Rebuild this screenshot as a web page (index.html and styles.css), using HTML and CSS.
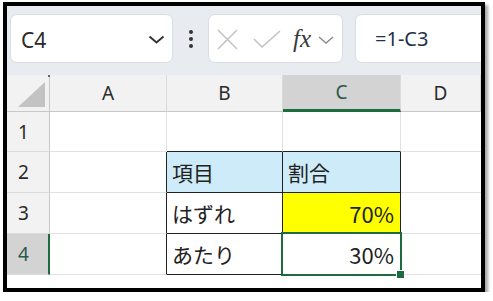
FILE: index.html
```html
<!DOCTYPE html>
<html lang="ja">
<head>
<meta charset="utf-8">
<link rel="stylesheet" href="styles.css">
</head>
<body>
<div class="frame">
  <div class="toolbar">
    <div class="namebox">
      <span class="name">C4</span>
      <svg class="chev" width="17" height="9" viewBox="0 0 17 9"><path d="M1.5 1.5 L8.5 7.5 L15.5 1.5" fill="none" stroke="#333" stroke-width="2"/></svg>
    </div>
    <div class="dots"><i></i><i></i><i></i></div>
    <div class="fxbox">
      <svg class="xicon" width="21" height="21" viewBox="0 0 21 21"><path d="M1 1 L20 20 M20 1 L1 20" stroke="#c4c4c4" stroke-width="1.6" fill="none"/></svg>
      <svg class="check" width="28" height="18" viewBox="0 0 28 18"><path d="M1 9 L9 17 L27 1" stroke="#c4c4c4" stroke-width="1.6" fill="none"/></svg>
      <span class="fx">fx</span>
      <svg class="chev2" width="16" height="8" viewBox="0 0 16 8"><path d="M1 1 L8 7 L15 1" fill="none" stroke="#8a8a8a" stroke-width="1.4"/></svg>
    </div>
    <div class="formula">=1-C3</div>
  </div>
  <div class="grid">
    <div class="corner"><svg width="27" height="25" viewBox="0 0 27 25"><path d="M27 0 L27 25 L0 25 Z" fill="#c3c3c3"/></svg><span class="cdot"></span></div>
    <div class="ch">A</div>
    <div class="ch">B</div>
    <div class="ch sel-col">C</div>
    <div class="ch last">D</div>

    <div class="rh">1</div>
    <div class="c"></div>
    <div class="c tb-bottom"></div>
    <div class="c tb-bottom"></div>
    <div class="c last"></div>

    <div class="rh">2</div>
    <div class="c tb-right"></div>
    <div class="c t head">項目</div>
    <div class="c t head">割合</div>
    <div class="c last"></div>

    <div class="rh">3</div>
    <div class="c tb-right"></div>
    <div class="c t">はずれ</div>
    <div class="c t num yellow">70%</div>
    <div class="c last"></div>

    <div class="rh sel-row">4</div>
    <div class="c tb-right"></div>
    <div class="c t">あたり</div>
    <div class="c t num active">30%<span class="selbox"><span class="handle"></span></span></div>
    <div class="c last"></div>

    <div class="rh end"></div>
    <div class="c end"></div>
    <div class="c end"></div>
    <div class="c end"></div>
    <div class="c end last"></div>
  </div>
</div>
</body>
</html>
```

FILE: styles.css
```css
html, body {
  margin: 0;
  padding: 0;
  background: #ffffff;
}
.frame {
  margin: 2px 0 0 3px;
  width: 474px;
  height: 282px;
  border: 4px solid #000;
  box-shadow: 3px 3px 3px rgba(0,0,0,0.35);
  overflow: hidden;
  background: #fff;
  display: flex;
  flex-direction: column;
}
.toolbar {
  height: 69px;
  box-sizing: border-box;
  background: #e8ebf0;
  display: flex;
  align-items: flex-start;
  padding: 8px 0 0 3px;
}
.namebox {
  width: 163px;
  height: 49px;
  box-sizing: border-box;
  background: #fff;
  border: 1px solid #dadee4;
  border-radius: 7px;
  display: flex;
  align-items: center;
  padding: 0 7px 0 10px;
}
.name {
  font-family: "Noto Sans", sans-serif;
  font-size: 21px;
  color: #2a2a2a;
  flex: 1;
  margin-top: 2px;
}
.chev { display: block; margin-top: 2px; }
.dots {
  width: 35px;
  height: 49px;
  display: flex;
  flex-direction: column;
  align-items: center;
  justify-content: center;
  gap: 3px;
  padding-top: 1px;
  box-sizing: border-box;
}
.dots i {
  display: block;
  width: 4px;
  height: 4px;
  border-radius: 50%;
  background: #333;
}
.fxbox {
  width: 135px;
  height: 49px;
  box-sizing: border-box;
  background: #fff;
  border: 1px solid #dadee4;
  border-radius: 7px;
  display: flex;
  align-items: center;
  padding-left: 8px;
}
.xicon { display: block; margin-top: 1px; }
.check { display: block; margin-left: 15px; }
.fx {
  font-family: "Liberation Serif", "DejaVu Serif", serif;
  font-style: italic;
  font-weight: normal;
  font-size: 25px;
  color: #3a3a3a;
  margin-left: 12px;
  letter-spacing: 0;
}
.chev2 { display: block; margin-left: 7px; margin-top: 2px; }
.formula {
  flex: 1;
  margin-left: 12px;
  margin-right: -12px;
  height: 49px;
  box-sizing: border-box;
  background: #fff;
  border: 1px solid #dadee4;
  border-radius: 7px;
  padding-left: 19px;
  display: flex;
  align-items: center;
  font-family: "Noto Sans", sans-serif;
  font-size: 20px;
  color: #23304a;
}
.grid {
  display: grid;
  grid-template-columns: 43px 117px 116px 118px 80px;
  grid-template-rows: 37px 40px 41px 41px 41px 1fr;
}
.grid > div {
  box-sizing: border-box;
  border-right: 1px solid #e1e1e1;
  border-bottom: 1px solid #e1e1e1;
}
.corner {
  background: #f2f2f2;
  position: relative;
  border-right: 1px solid #c8c8c8 !important;
  border-bottom: 1px solid #c8c8c8 !important;
}
.corner svg { position: absolute; left: 11px; top: 7px; }
.cdot {
  position: absolute;
  right: -1px;
  top: 0;
  width: 2px;
  height: 2px;
  background: #666;
}
.ch {
  background: #f2f2f2;
  border-bottom: 1px solid #c8c8c8 !important;
  border-right: 1px solid #dadada !important;
  font-family: "Noto Sans", sans-serif;
  font-size: 19px;
  color: #2a2a2a;
  display: flex;
  align-items: center;
  justify-content: center;
}
.ch.sel-col {
  background: #d3d3d3;
  border-bottom: 3px solid #1d6b3e !important;
  color: #2a5a48;
}
.rh {
  background: #f2f2f2;
  border-right: 1px solid #c8c8c8 !important;
  border-bottom: 1px solid #dcdcdc !important;
  font-family: "Noto Sans", sans-serif;
  font-size: 19px;
  color: #2a2a2a;
  display: flex;
  align-items: center;
  padding-left: 11px;
}
.rh.sel-row {
  background: #d3d3d3;
  border-right: 2px solid #1d6b3e !important;
  color: #2a5a48;
}
.grid > .last { border-right: none; }
.tb-bottom { border-bottom: 1px solid #222 !important; }
.tb-right { border-right: 1px solid #222 !important; }
.t {
  border-right: 1px solid #222 !important;
  border-bottom: 1px solid #222 !important;
  font-family: "Noto Sans CJK JP", sans-serif;
  font-size: 21px;
  color: #222;
  display: flex;
  align-items: center;
  padding-left: 5px;
}
.head { background: #cdebf8; }
.yellow { background: #ffff00; }
.num {
  justify-content: flex-end;
  padding-right: 6px;
  font-size: 22px;
}
.active { position: relative; }
.selbox {
  position: absolute;
  left: -2px;
  top: -2px;
  right: -2px;
  bottom: -2px;
  border: 2px solid #1d6b3e;
}
.handle {
  position: absolute;
  right: -5px;
  bottom: -5px;
  width: 7px;
  height: 7px;
  background: #1d6b3e;
  border: 1px solid #fff;
}
.rh.end { border-bottom: none !important; }
.c.end { border-bottom: none; }
```
